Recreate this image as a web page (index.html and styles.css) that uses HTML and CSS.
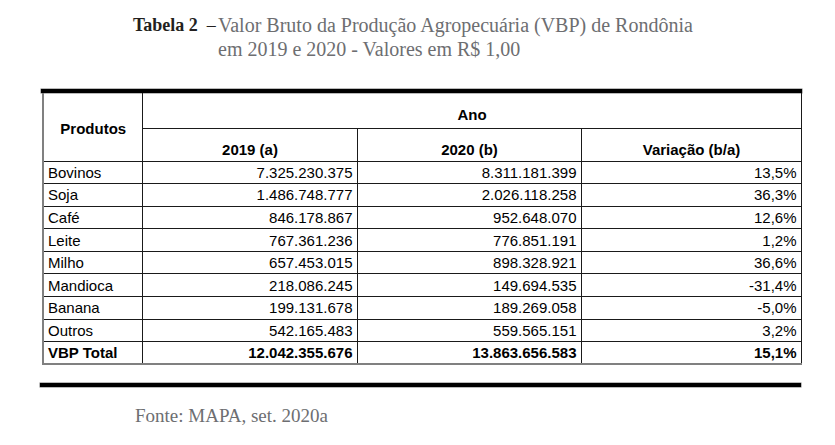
FILE: index.html
```html
<!DOCTYPE html>
<html lang="pt">
<head>
<meta charset="utf-8">
<link rel="stylesheet" href="styles.css">
</head>
<body>
<div class="caption">
  <div class="label"><b>Tabela 2</b><span class="dash">–</span></div>
  <div class="ctext">Valor Bruto da Produção Agropecuária (VBP) de Rondônia<br>em 2019 e 2020 - Valores em R$ 1,00</div>
</div>
<div class="frame">
  <div class="bar"></div>
  <table class="vbp">
    <colgroup>
      <col class="c1"><col class="c2"><col class="c3"><col class="c4">
    </colgroup>
    <thead>
      <tr class="h1">
        <th rowspan="2" class="prod">Produtos</th>
        <th colspan="3" class="ano">Ano</th>
      </tr>
      <tr class="h2">
        <th>2019 (a)</th>
        <th>2020 (b)</th>
        <th>Variação (b/a)</th>
      </tr>
    </thead>
    <tbody>
      <tr><td>Bovinos</td><td class="n">7.325.230.375</td><td class="n">8.311.181.399</td><td class="n">13,5%</td></tr>
      <tr><td>Soja</td><td class="n">1.486.748.777</td><td class="n">2.026.118.258</td><td class="n">36,3%</td></tr>
      <tr><td>Café</td><td class="n">846.178.867</td><td class="n">952.648.070</td><td class="n">12,6%</td></tr>
      <tr><td>Leite</td><td class="n">767.361.236</td><td class="n">776.851.191</td><td class="n">1,2%</td></tr>
      <tr><td>Milho</td><td class="n">657.453.015</td><td class="n">898.328.921</td><td class="n">36,6%</td></tr>
      <tr><td>Mandioca</td><td class="n">218.086.245</td><td class="n">149.694.535</td><td class="n">-31,4%</td></tr>
      <tr><td>Banana</td><td class="n">199.131.678</td><td class="n">189.269.058</td><td class="n">-5,0%</td></tr>
      <tr><td>Outros</td><td class="n">542.165.483</td><td class="n">559.565.151</td><td class="n">3,2%</td></tr>
      <tr class="total"><td>VBP Total</td><td class="n">12.042.355.676</td><td class="n">13.863.656.583</td><td class="n">15,1%</td></tr>
    </tbody>
  </table>
  <div class="bar bottom"></div>
</div>
<p class="source">Fonte: MAPA, set. 2020a</p>
</body>
</html>
```

FILE: styles.css
```css
html, body {
  margin: 0;
  padding: 0;
  background: #fff;
}

.caption {
  display: flex;
  margin: 13px 0 0 133px;
  font-family: "Liberation Serif", "DejaVu Serif", serif;
  font-size: 20px;
  line-height: 24px;
  color: #6d6e71;
}

.label {
  width: 85px;
  flex: none;
  display: flex;
  align-items: baseline;
  white-space: nowrap;
}

.label b {
  color: #231f20;
  font-weight: bold;
  font-size: 18px;
}

.dash {
  margin-left: 9px;
  color: #231f20;
  font-size: 18px;
}

.frame {
  margin: 28px 0 0 41px;
  width: 761px;
}

.bar {
  height: 4px;
  background: #000;
  box-shadow: 0 0 0 0.5px #777;
}

.bar.bottom {
  margin-top: 18px;
  margin-left: -1px;
  width: 761px;
}

.vbp {
  margin-left: 1px;
  width: 759px;
  border-collapse: collapse;
  table-layout: fixed;
  font-family: "Liberation Sans", Arial, sans-serif;
  font-size: 15px;
  color: #000;
  border-left: 2px solid #808080;
  border-right: 1px solid #666;
  border-bottom: 2px solid #808080;
}

.c1 { width: 99px; }
.c2 { width: 215px; }
.c3 { width: 224px; }
.c4 { width: 220px; }

.vbp th,
.vbp td {
  border: 1px solid #1a1a1a;
  padding: 0 3px 0 4px;
  line-height: 17px;
}

.vbp th {
  font-weight: bold;
  text-align: center;
  vertical-align: bottom;
}

.vbp thead tr.h1 th {
  border-top: none;
}

.h1 { height: 35px; }
.h2 { height: 33px; }

.vbp th.prod {
  vertical-align: middle;
  padding-top: 3px;
}

.vbp th.ano {
  padding-bottom: 5px;
}

.h2 th {
  padding-bottom: 3px;
}

.vbp tbody tr {
  height: 22.6px;
}

.vbp td {
  vertical-align: middle;
  white-space: nowrap;
}

.vbp td.n {
  text-align: right;
  padding-right: 4px;
}

.vbp tr.total td {
  font-weight: bold;
}

.source {
  margin: 18px 0 0 135px;
  font-family: "Liberation Serif", "DejaVu Serif", serif;
  font-size: 19px;
  line-height: 22px;
  color: #6d6e71;
}
```
